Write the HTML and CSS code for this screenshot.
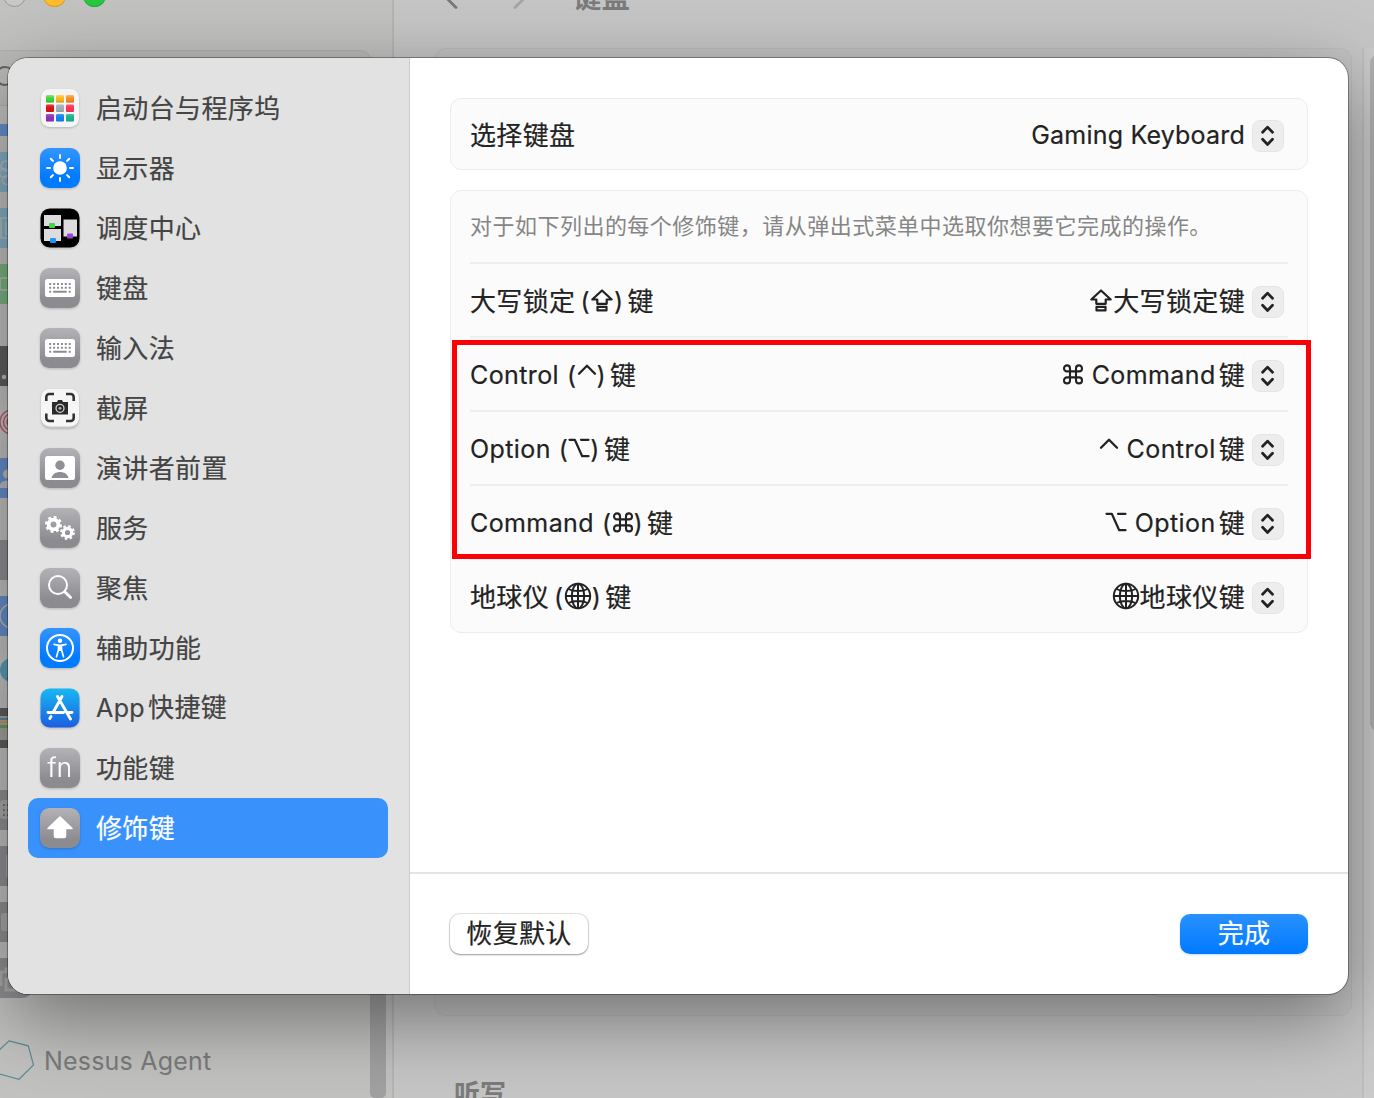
FILE: index.html
```html
<!DOCTYPE html>
<html lang="zh-CN">
<head>
<meta charset="utf-8">
<title>键盘</title>
<link rel="stylesheet" href="styles.css">
</head>
<body>
<svg class="defs" width="0" height="0">
  <defs>
    <linearGradient id="store" x1="0" y1="0" x2="0" y2="1"><stop offset="0" stop-color="#18b8f4"/><stop offset="1" stop-color="#1c5ee0"/></linearGradient>
    <linearGradient id="shade" x1="0" y1="0" x2="0" y2="1"><stop offset="0" stop-color="#fff" stop-opacity=".4"/><stop offset=".5" stop-color="#fff" stop-opacity="0"/><stop offset="1" stop-color="#000" stop-opacity=".22"/></linearGradient>
    <symbol id="updown" viewBox="0 0 32 32"><path d="M10.200 12 15.500 6.500l5.300 5.500M10.200 19.500l5.300 5.500 5.300-5.500" fill="none" stroke="#222" stroke-width="2.900" stroke-linecap="round" stroke-linejoin="round"/></symbol>
    <symbol id="caps" viewBox="0 0 24 26"><path d="M12 3.500 2.300 12.500h5v4.300h9.400v-4.300h5zM7.500 19.800h9v3.600h-9z" fill="none" stroke="#222" stroke-width="2.200" stroke-linejoin="round"/></symbol>
    <symbol id="ctrl" viewBox="0 0 20 26"><path d="M2 12.700 10 4.700l8 8" fill="none" stroke="#222" stroke-width="2.300" stroke-linecap="round" stroke-linejoin="round"/></symbol>
    <symbol id="opt" viewBox="0 0 22 26"><path d="M1.500 4.800h5.300l7.400 16.400h6.300M13 4.800h7.500" fill="none" stroke="#222" stroke-width="2.200" stroke-linecap="round" stroke-linejoin="round"/></symbol>
    <symbol id="cmd" viewBox="0 0 22 26"><path d="M8 10.400h6v6H8zM8 10.400H5a3 3 0 1 1 3-3zM14 10.400h3a3 3 0 1 0-3-3zM8 16.400H5a3 3 0 1 0 3 3zM14 16.400h3a3 3 0 1 1-3 3z" fill="none" stroke="#222" stroke-width="2.100" stroke-linejoin="round"/></symbol>
    <symbol id="globe" viewBox="0 0 28 28"><g fill="none" stroke="#222" stroke-width="2"><circle cx="14" cy="14" r="12.200"/><ellipse cx="14" cy="14" rx="6.200" ry="12.200"/><path d="M14 2v24M2 14h24M4.500 7c5 2.800 14 2.800 19 0M4.500 21c5-2.800 14-2.800 19 0"/></g></symbol>
    <symbol id="kbd" viewBox="0 0 40 40"><rect x="5" y="11" width="30" height="18" rx="2.500" fill="#fff"/><path d="M9.200 16h22M9.200 19.800h22" stroke="#8c8c91" stroke-width="2" stroke-dasharray="2 1.900"/><path d="M9.200 23.700h2M13.200 23.700h13.500M28.700 23.700h2" stroke="#8c8c91" stroke-width="2"/></symbol>
  </defs>
</svg>

<div class="window">
  <aside class="rail">
    <div class="lights"><i class="off"></i><i class="min"></i><i class="max"></i></div>
    <div class="search"><i></i></div>
    <div class="apps">
      <i class="blue first"></i>
      <i class="cyan"><svg viewBox="0 0 40 40"><g fill="none" stroke="#b9bdc0" stroke-width="1.500"><circle cx="14" cy="14" r="5"/><circle cx="12" cy="21" r="4.500"/><circle cx="15" cy="28" r="4.500"/></g></svg></i>
      <i class="cyan"><svg viewBox="0 0 40 40"><path d="M30 10H9v20h21M14 14v12h12" fill="none" stroke="#b9bdc0" stroke-width="1.500"/></svg></i>
      <i class="green last"><svg viewBox="0 0 40 40"><rect x="8" y="14" width="24" height="12" rx="2" fill="none" stroke="#b9bdc0" stroke-width="1.500"/></svg></i>
      <i class="dark"><svg viewBox="0 0 40 40"><circle cx="12" cy="31" r="2.200" fill="#bbb"/></svg></i>
      <i class="pale"><svg viewBox="0 0 40 40"><g fill="none" stroke="#b9606c" stroke-width="1.500"><circle cx="20" cy="20" r="12"/><circle cx="20" cy="20" r="8.500"/><circle cx="20" cy="20" r="5"/></g></svg></i>
      <i class="blue last"><svg viewBox="0 0 40 40"><circle cx="15.500" cy="16" r="4.500" fill="#b9bdc0"/><path d="M7 30c0-10 17-10 17 0z" fill="#b9bdc0"/></svg></i>
      <i class="gray"></i>
      <i class="blue"><svg viewBox="0 0 40 40"><circle cx="20" cy="20" r="12" fill="none" stroke="#b9bdc0" stroke-width="1.500"/></svg></i>
      <i class="pale"><svg viewBox="0 0 40 40"><circle cx="20" cy="18" r="12" fill="#5b9fb6"/><path d="M14 26h10v9z" fill="#8057b5"/></svg></i>
      <i class="dark last"><svg viewBox="0 0 40 40"><path d="M4 8h30v24H4z" fill="#a5a49c"/><path d="M4 10h30v2H4z" fill="#5b89a5"/><path d="M4 13h30v2H4z" fill="#b99b52"/><path d="M4 17h30v3H4z" fill="#6d9a63"/></svg></i>
      <i class="gray"><svg viewBox="0 0 40 40"><rect x="8" y="10" width="26" height="19" rx="3" fill="#aaa"/><path d="M11 15h12M11 20h12M11 25h12" stroke="#777" stroke-width="2" stroke-dasharray="2 2"/></svg></i>
      <i class="gray"><svg viewBox="0 0 40 40"><rect x="14" y="8" width="18" height="24" rx="3" fill="#aaa"/></svg></i>
      <i class="gray"><svg viewBox="0 0 40 40"><rect x="9" y="11" width="22" height="18" rx="3" fill="#aaa"/></svg></i>
      <i class="gray last"><svg viewBox="0 0 40 40"><path d="M9 28V14h5v-3h10v4M14 21h12v11H14z" fill="none" stroke="#aaa" stroke-width="3"/></svg></i>
      <div class="nessus"><svg width="42" height="40" viewBox="0 0 42 40"><path d="m17 .8 19.300 5L41.500 25 27 39.300 7.500 34 2 15z" fill="none" stroke="#5e8c97" stroke-width="1.200"/></svg><span>Nessus Agent</span></div>
    </div>
    <div class="rail-scroll"></div>
  </aside>
  <main class="back">
    <header>
      <svg width="100" height="36" viewBox="0 0 100 36"><path d="m28 13-10 10.500L28 33.500" fill="none" stroke="#777" stroke-width="2.800" stroke-linecap="round" stroke-linejoin="round"/><path d="m87 13 10 10.500L87 33.500" fill="none" stroke="#a5a5a5" stroke-width="2.800" stroke-linecap="round" stroke-linejoin="round"/></svg>
      <b>键盘</b>
    </header>
    <div class="back-card"><i></i></div>
    <h2>听写</h2>
    <div class="back-scroll"><i></i></div>
  </main>
</div>

<div class="sheet">
  <nav class="side">
    <a class="item"><svg viewBox="0 0 40 40"><rect x="1" y="1" width="38" height="38" rx="8.500" fill="#f5f5f5"/><g><rect x="6" y="7" width="8" height="7.500" rx="1.300" fill="#3ad22c"/><rect x="16" y="7" width="8" height="7.500" rx="1.300" fill="#ffb510"/><rect x="26" y="7" width="8" height="7.500" rx="1.300" fill="#f5891b"/><rect x="6" y="16.500" width="8" height="7.500" rx="1.300" fill="#d90d12"/><rect x="16" y="16.500" width="8" height="7.500" rx="1.300" fill="#9eabb3"/><rect x="26" y="16.500" width="8" height="7.500" rx="1.300" fill="#ff2d55"/><rect x="6" y="26" width="8" height="7.500" rx="1.300" fill="#8b2dbb"/><rect x="16" y="26" width="8" height="7.500" rx="1.300" fill="#0c7fee"/><rect x="26" y="26" width="8" height="7.500" rx="1.300" fill="#16b08d"/></g><g fill="url(#shade)"><path d="M6 7h8v7.500H6zM16 7h8v7.500h-8zM26 7h8v7.500h-8z"/><path d="M6 16.500h8V24H6zM16 16.500h8V24h-8zM26 16.500h8V24h-8z" opacity=".5"/><path d="M6 26h8v7.500H6zM16 26h8v7.500h-8zM26 26h8v7.500h-8z" opacity=".5"/></g></svg><span>启动台与程序坞</span></a>
    <a class="item"><svg class="tile azure" viewBox="0 0 40 40"><circle cx="20" cy="20" r="6.800" fill="#fff"/><path d="M20 7v3M20 30v3M7 20h3M30 20h3M10.800 10.800l2.100 2.100M27.100 27.100l2.100 2.100M29.200 10.800l-2.100 2.100M12.900 27.100l-2.100 2.100" stroke="#fff" stroke-width="2" stroke-linecap="round"/></svg><span>显示器</span></a>
    <a class="item"><svg viewBox="0 0 40 40"><rect x=".5" y=".5" width="39" height="39" rx="9" fill="#000"/><path d="M4 7h17v11H4zM4 21h17v12H4zM23.500 11.500H37v17H23.500z" fill="#dedbdd"/><rect x="9" y="15" width="6" height="5" rx="1" fill="#42d640"/><rect x="10" y="30" width="6" height="5" rx="1" fill="#1897ff"/><rect x="27" y="25.500" width="6" height="5" rx="1" fill="#9a45da"/></svg><span>调度中心</span></a>
    <a class="item"><svg class="tile steel" viewBox="0 0 40 40"><use href="#kbd"/></svg><span>键盘</span></a>
    <a class="item"><svg class="tile steel" viewBox="0 0 40 40"><use href="#kbd"/></svg><span>输入法</span></a>
    <a class="item"><svg viewBox="0 0 40 40"><rect x="1" y="2" width="38" height="38" rx="9" fill="#c4c4c4"/><rect x="1" y="1" width="38" height="37.500" rx="8.500" fill="#f6f6f6"/><path d="M6.300 13V9a3 3 0 0 1 3-3H14M26 6h4.700a3 3 0 0 1 3 3v4M33.700 25.500V30a3 3 0 0 1-3 3H26M14 33H9.300a3 3 0 0 1-3-3v-4.500" fill="none" stroke="#333" stroke-width="2.600"/><path d="M12 14h5l1-2h4l1 2h5v12.500H12z" fill="#2c2c2c"/><circle cx="20" cy="20.300" r="4" fill="#222" stroke="#d5d5d5" stroke-width="1.300"/><circle cx="20" cy="20.300" r="1.500" fill="#aaa"/></svg><span>截屏</span></a>
    <a class="item"><svg class="tile steel" viewBox="0 0 40 40"><rect x="5" y="8" width="30" height="24" rx="2.500" fill="#fff"/><circle cx="20" cy="17.300" r="4.700" fill="#8f8f94"/><path d="M11.500 30c1.500-8 15.500-8 17 0z" fill="#8f8f94"/></svg><span>演讲者前置</span></a>
    <a class="item"><svg class="tile steel" viewBox="0 0 40 40"><g fill="none" stroke="#fff"><circle cx="13.500" cy="16.500" r="4.900" stroke-width="3.800"/><circle cx="13.500" cy="16.500" r="7.300" stroke-width="2.400" stroke-dasharray="2.900 2.834"/><circle cx="27.500" cy="24.500" r="4.200" stroke-width="3.200"/><circle cx="27.500" cy="24.500" r="6.300" stroke-width="2.200" stroke-dasharray="2.500 2.448"/></g></svg><span>服务</span></a>
    <a class="item"><svg class="tile steel" viewBox="0 0 40 40"><circle cx="18" cy="17" r="9" fill="none" stroke="#fff" stroke-width="2"/><path d="m25 24 5.600 5.600" stroke="#fff" stroke-width="2.800" stroke-linecap="round"/></svg><span>聚焦</span></a>
    <a class="item"><svg class="tile azure" viewBox="0 0 40 40"><circle cx="20" cy="20" r="13" fill="none" stroke="#fff" stroke-width="2"/><circle cx="20" cy="12.800" r="2.200" fill="#fff"/><path d="M14 16.300l4.500 1v4.500l-2 7M26 16.300l-4.500 1v4.500l2 7" fill="none" stroke="#fff" stroke-width="1.700" stroke-linecap="round" stroke-linejoin="round"/><path d="M18 16.500h4V23h-4z" fill="#fff"/></svg><span>辅助功能</span></a>
    <a class="item"><svg viewBox="0 0 40 40"><rect x=".5" y=".5" width="39" height="39" rx="9" fill="url(#store)"/><path d="M22 8.500 13.300 24M17.500 8.500l13 22.500M8 24.500h15.500M28.500 24.500H32M11 28.500l-1.200 2" stroke="#fff" stroke-width="2.900" stroke-linecap="round"/></svg><span><em>App</em>快捷键</span></a>
    <a class="item"><span class="tile steel fn">fn</span><span>功能键</span></a>
    <a class="item selected"><svg class="tile steel" viewBox="0 0 40 40"><path d="M20 9 8 20.500h6.500V28q0 1.500 1.500 1.500h8q1.500 0 1.500-1.500v-7.500H32z" fill="#fff" stroke="#fff" stroke-width="1.600" stroke-linejoin="round"/></svg><span>修饰键</span></a>
  </nav>
  <section class="content">
    <div class="panel">
      <div class="card single">
        <div class="row"><span class="label">选择键盘</span><span class="value"><em class="gaming">Gaming Keyboard</em><svg class="step"><use href="#updown"/></svg></span></div>
      </div>
      <div class="card">
        <div class="row note"><span>对于如下列出的每个修饰键，请从弹出式菜单中选取你想要它完成的操作。</span></div>
        <div class="row"><span class="label">大写锁定<em class="open tight">(</em><svg class="k24"><use href="#caps"/></svg><em class="close">)</em>键</span><span class="value"><svg class="k24"><use href="#caps"/></svg>大写锁定键<svg class="step"><use href="#updown"/></svg></span></div>
        <div class="row"><span class="label"><em>Control</em><em class="open">(</em><svg class="k20"><use href="#ctrl"/></svg><em class="close">)</em>键</span><span class="value"><svg class="k22 lead"><use href="#cmd"/></svg><em class="name">Command</em>键<svg class="step"><use href="#updown"/></svg></span></div>
        <div class="row"><span class="label"><em>Option</em><em class="open">(</em><svg class="k22"><use href="#opt"/></svg><em class="close">)</em>键</span><span class="value"><svg class="k20 lead"><use href="#ctrl"/></svg><em class="name">Control</em>键<svg class="step"><use href="#updown"/></svg></span></div>
        <div class="row"><span class="label"><em>Command</em><em class="open">(</em><svg class="k22"><use href="#cmd"/></svg><em class="close">)</em>键</span><span class="value"><svg class="k22 lead"><use href="#opt"/></svg><em class="name">Option</em>键<svg class="step"><use href="#updown"/></svg></span></div>
        <div class="row"><span class="label">地球仪<em class="open tight">(</em><svg class="k28"><use href="#globe"/></svg><em class="close">)</em>键</span><span class="value"><svg class="k28"><use href="#globe"/></svg>地球仪键<svg class="step"><use href="#updown"/></svg></span></div>
        <div class="highlight"></div>
      </div>
    </div>
    <footer><button class="reset">恢复默认</button><button class="done">完成</button></footer>
  </section>
</div>
</body>
</html>
```
FILE: styles.css
```css
* { box-sizing: border-box; }
body {
  margin: 0;
  width: 1374px;
  height: 1098px;
  overflow: hidden;
  position: relative;
  font-family: "Noto Sans CJK SC", sans-serif;
  font-size: 26px;
  letter-spacing: .36px;
  color: #222;
}
.defs { position: absolute; }
em, i { font-style: normal; }
em { font-family: Inter, sans-serif; font-size: 25px; letter-spacing: .4px; padding-top: 2px; }

/* dimmed window behind the sheet */
.window { display: flex; width: 1374px; height: 1098px; overflow: hidden; background: #c6c6c6; }
.rail { position: relative; width: 394px; height: 1098px; flex: none; background: #c2c2c1; border-right: 2px solid #b5b5b5; overflow: hidden; }
.lights { display: flex; gap: 17px; margin: -16px 0 0 3px; height: 24px; }
.lights i { width: 23px; height: 23px; border-radius: 50%; border: 1px solid #0002; }
.lights .off { background: #c9c9c9; border-color: #999; }
.lights .min { background: #febc2e; }
.lights .max { background: #28c840; }
.search { height: 56px; margin: 42px 20px 0 -20px; border: 1px solid #b0b0ae; border-radius: 12px; background: #bbbbb9; padding: 15px 14px; }
.search i { display: block; width: 20px; height: 20px; border: 2px solid #666; border-radius: 50%; }
.apps { display: flex; flex-direction: column; gap: 16px; margin: 18px 0 0 -8px; }
.apps > i { width: 40px; height: 40px; border-radius: 9px; display: block; flex: none; }
.apps > i.first { height: 12px; border-radius: 0 0 9px 9px; }
.apps svg { display: block; }
.apps .last { margin-bottom: 26px; }
.blue { background: #6790cc; }
.cyan { background: #84b1c6; }
.green { background: #7cb580; }
.dark { background: #606060; }
.pale { background: #c4c4c4; }
.gray { background: #919195; }
.nessus { display: flex; align-items: center; gap: 10px; height: 40px; font-family: Inter, sans-serif; font-size: 25px; letter-spacing: .2px; color: #7b7b7b; }
.nessus svg { flex: none; }
.nessus span { padding-top: 2px; }
.rail-scroll { position: absolute; right: 6px; top: 700px; width: 16px; height: 398px; background: #a1a1a1; border-radius: 0 0 5px 5px; }
.back { position: relative; flex: 1; padding: 0 22px 0 40px; }
.back header { display: flex; align-items: flex-end; height: 10px; margin-left: -6px; gap: 45px; color: #7b7b7b; }
.back header svg { flex: none; }
.back header b { font-size: 28.5px; line-height: 36px; margin-bottom: -4px; letter-spacing: 0; }
.back-card { height: 968px; margin-top: 38px; border: 1px solid #bcbcbc; border-radius: 12px; background: #c3c3c3; padding: 0 16px; display: flex; justify-content: flex-end; align-items: flex-end; }
.back-card i { width: 186px; height: 40px; margin-bottom: 18px; border-radius: 10px; border: 1px solid #b1b1b1; background: #c9c9c9; }
.back h2 { margin: 57px 0 0 20px; font-size: 26px; line-height: 38px; color: #7b7b7b; letter-spacing: 0; }
.back-scroll { position: absolute; top: 48px; right: 0; width: 12px; height: 1050px; border-left: 2px solid #bdbdbd; background: #cacaca; padding: 7px 0 0 6px; }
.back-scroll i { display: block; width: 16px; height: 676px; border-radius: 8px; background: #b0b0b0; }

/* settings sheet */
.sheet { position: absolute; left: 8px; top: 58px; width: 1340px; height: 936px; display: flex; border-radius: 20px; overflow: hidden; background: #fff; box-shadow: 0 0 0 1px #0005, 0 24px 80px rgba(0,0,0,.43); -webkit-text-stroke: .2px; }
.side { width: 402px; flex: none; padding: 20px; background: #e2e2e2; border-right: 1px solid #ccc; color: #444; }
.item { display: flex; align-items: center; gap: 16px; width: 360px; height: 60px; padding: 0 12px; border-radius: 10px; line-height: 38px; white-space: nowrap; }
.item > svg, .fn { width: 40px; height: 40px; flex: none; border-radius: 9.500px; filter: drop-shadow(0 1px 1px #0003); }
.item > span:last-child { margin-top: -2px; }
.item em { margin-right: 3px; }
.azure { background: linear-gradient(#3395ff, #007aff 75%); }
.steel { background: linear-gradient(#b2b2b7, #8b8b90 80%); }
.fn { color: #fff; font: 300 26px/40px Inter, sans-serif; text-align: center; }
.selected { background: #3991fc; color: #fff; }
.content { flex: 1; display: flex; flex-direction: column; }
.panel { flex: 1; display: flex; flex-direction: column; gap: 20px; padding: 40px 40px 0; }
.card { position: relative; width: 858px; padding: 0 19px; border: 1px solid #ececec; border-radius: 11px; background: #fbfbfb; }
.row { display: flex; align-items: center; justify-content: space-between; height: 74px; border-bottom: 2px solid #ededed; }
.row.note { height: 73px; padding-bottom: 5px; font-size: 22px; letter-spacing: .48px; color: #868686; -webkit-text-stroke: 0; }
.row:nth-last-child(2) { height: 72px; border: 0; }
.single .row { height: 70px; border: 0; }
.label, .value { display: flex; align-items: center; height: 38px; line-height: 38px; white-space: nowrap; }
.value { padding-right: 4px; }
.gaming { letter-spacing: .2px; }
.open { margin-left: 8px; }
.open.tight { margin-left: 5px; }
.close { margin-right: 4px; }
.name { margin-right: 3px; }
.lead { margin-right: 8px; }
.k20 { width: 20px; height: 26px; }
.k22 { width: 22px; height: 26px; }
.k24 { width: 24px; height: 26px; }
.k28 { width: 28px; height: 28px; }
.step { width: 32px; height: 32px; margin: 3px 0 0 7px; border-radius: 8px; background: #ededed; border: 1px solid #e5e5e5; }
.highlight { position: absolute; left: 1px; top: 149px; width: 859px; height: 219px; border: 5px solid #fb0007; }
footer { height: 122px; border-top: 2px solid #e4e4e4; padding: 40px; display: flex; justify-content: space-between; }
button { height: 40px; padding: 0 0 4px; border: 0; border-radius: 10px; font: 26px/36px "Noto Sans CJK SC", sans-serif; letter-spacing: .36px; }
.reset { width: 138px; background: #fff; color: #222; box-shadow: 0 0 0 1px #0000001a, 0 1px 2px #0005; }
.done { width: 128px; background: linear-gradient(#2a91ff, #007aff); color: #fff; box-shadow: 0 1px 2px #007aff40; }
```
